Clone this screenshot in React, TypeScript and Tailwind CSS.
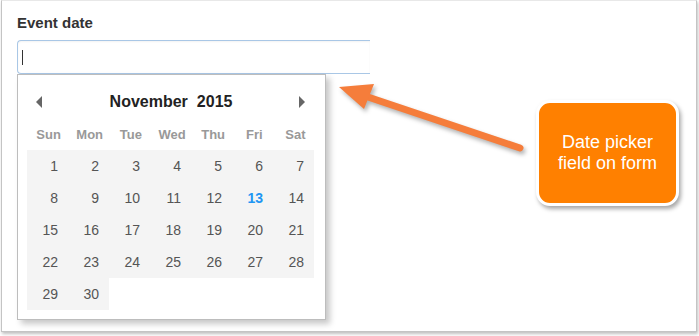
import React from 'react'

const dayNames = ['Sun', 'Mon', 'Tue', 'Wed', 'Thu', 'Fri', 'Sat']

// November 2015 starts on a Sunday
const days = Array.from({ length: 30 }, (_, i) => i + 1)

export default function App() {
  return (
    <div className="w-[699px] h-[336px] bg-white overflow-hidden" style={{ fontFamily: '"Liberation Sans", Arial, sans-serif' }}>
      <div className="relative ml-px w-[696px] h-[332px] border border-[#c4c4c4] border-t-[#e8e8e8] bg-white shadow-[1px_2px_3px_rgba(0,0,0,0.25)] pl-[15px] pt-[12px]">
        {/* Label */}
        <div className="text-[15px] leading-[20px] font-bold text-[#333]">Event date</div>

        {/* Input (cut off on the right) */}
        <div className="mt-[7px] w-[353px] h-[34px] border border-r-0 border-[#a9c7e6] rounded-l-[4px] flex items-center pl-[4px] shadow-[inset_0_1px_2px_rgba(0,0,0,0.05)]">
          <div className="w-px h-[15px] bg-[#333]"></div>
        </div>

        {/* Date picker popup */}
        <div className="w-[309px] border border-[#bdbdbd] bg-white shadow-[4px_4px_6px_rgba(0,0,0,0.22)] pl-[9px] pr-[10px] pb-[9px]">
          <div className="h-[45px] pt-[17px] flex items-start justify-between px-[9px]">
            <svg width="8" height="12" viewBox="0 0 8 12" className="mt-[4px]">
              <path d="M6 0 L0 6 L6 12 Z" fill="#666" />
            </svg>
            <div className="flex gap-[9px] text-[16px] leading-[20px] font-bold text-[#222]">
              <span>November</span>
              <span>2015</span>
            </div>
            <svg width="8" height="12" viewBox="0 0 8 12" className="mt-[4px]">
              <path d="M1 0 L7 6 L1 12 Z" fill="#666" />
            </svg>
          </div>
          <div className="grid grid-cols-7 h-[30px] items-center">
            {dayNames.map((d) => (
              <div key={d} className="text-center text-[13px] font-bold text-[#999] pl-[2px]">{d}</div>
            ))}
          </div>
          <div className="grid grid-cols-7 w-[287px]">
            {days.map((d) => (
              <div
                key={d}
                className={`h-[32px] bg-[#f4f4f4] flex items-center justify-end pr-[10px] text-[14px] ${
                  d === 13 ? 'font-bold text-[#2196f3]' : 'text-[#555]'
                }`}
              >
                {d}
              </div>
            ))}
          </div>
        </div>

        {/* Arrow annotation */}
        <svg className="absolute left-0 top-0 pointer-events-none drop-shadow-[2px_3px_2px_rgba(0,0,0,0.3)]" width="696" height="332">
          <line x1="360" y1="94" x2="518" y2="147" stroke="#f57d3b" strokeWidth="7" strokeLinecap="round" />
          <polygon points="337,86 372,83 362,108" fill="#f57d3b" />
        </svg>

        {/* Callout */}
        <div className="absolute left-[534px] top-[99px] w-[143px] h-[106px] rounded-[14px] border-[3px] border-white bg-[#ff8000] shadow-[2px_3px_4px_rgba(0,0,0,0.35)] flex items-center justify-center text-center text-white text-[18px] leading-[21px]">
          <div>
            Date picker
            <br />
            field on form
          </div>
        </div>
      </div>
    </div>
  )
}
